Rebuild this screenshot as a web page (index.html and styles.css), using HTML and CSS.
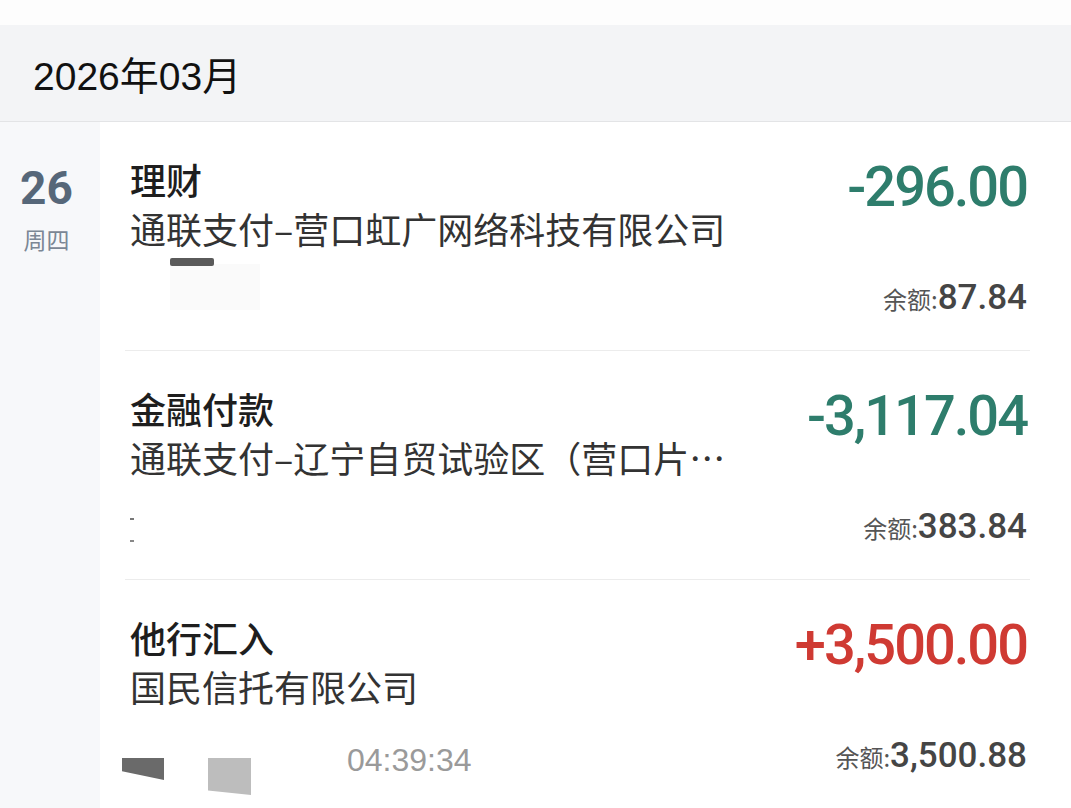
FILE: index.html
```html
<!DOCTYPE html>
<html lang="zh-CN">
<head>
<meta charset="utf-8">
<title>交易明细</title>
<link rel="stylesheet" href="styles.css">
</head>
<body>
<div class="top-strip"></div>
<div class="month">2026年03月</div>
<div class="day">
  <div class="date-col">
    <div class="date-num">26</div>
    <div class="date-week">周四</div>
  </div>
  <div class="list">
    <div class="item">
      <div class="info">
        <div class="title">理财</div>
        <div class="sub">通联支付–营口虹广网络科技有限公司</div>
        <div class="meta"><span class="mask mask-ghost"></span><span class="mask mask-bar"></span></div>
      </div>
      <div class="money">
        <div class="amount out">-296.00</div>
        <div class="balance"><span class="bal-label">余额:</span><span class="bal-num">87.84</span></div>
      </div>
    </div>
    <div class="item">
      <div class="info">
        <div class="title">金融付款</div>
        <div class="sub">通联支付–辽宁自贸试验区（营口片…</div>
        <div class="meta"><span class="mask mask-tick"></span></div>
      </div>
      <div class="money">
        <div class="amount out">-3,117.04</div>
        <div class="balance"><span class="bal-label">余额:</span><span class="bal-num">383.84</span></div>
      </div>
    </div>
    <div class="item last">
      <div class="info">
        <div class="title">他行汇入</div>
        <div class="sub">国民信托有限公司</div>
        <div class="meta"><span class="mask mask-dark"></span><span class="mask mask-light"></span><span class="time">04:39:34</span></div>
      </div>
      <div class="money">
        <div class="amount in">+3,500.00</div>
        <div class="balance"><span class="bal-label">余额:</span><span class="bal-num">3,500.88</span></div>
      </div>
    </div>
  </div>
</div>
</body>
</html>
```

FILE: styles.css
```css
html, body {
  margin: 0;
  padding: 0;
  background: #ffffff;
  font-family: "Liberation Sans", "Noto Sans CJK SC", sans-serif;
}

.top-strip {
  height: 25px;
  background: #fdfdfd;
}

.month {
  height: 97px;
  box-sizing: border-box;
  padding-left: 33px;
  background: #f3f4f6;
  border-bottom: 1px solid #e3e4e6;
  display: flex;
  align-items: center;
  font-size: 39px;
  color: #111111;
  font-family: "Liberation Sans", "Noto Sans CJK SC", sans-serif;
}

.day {
  display: flex;
  min-height: 690px;
}

.date-col {
  width: 100px;
  flex: none;
  background: #f7f8fa;
  display: flex;
  flex-direction: column;
  align-items: center;
  padding-top: 41px;
}

.date-num {
  font-family: Roboto, "Liberation Sans", sans-serif;
  font-weight: 700;
  font-size: 46px;
  line-height: 50px;
  color: #566779;
  margin-left: -7px;
}

.date-week {
  font-family: "Noto Sans CJK SC", sans-serif;
  font-size: 23px;
  line-height: 30px;
  margin-top: 11px;
  color: #7b8795;
  margin-left: -7px;
}

.list {
  flex: 1;
  padding: 0 41px 0 25px;
}

.item {
  height: 229px;
  box-sizing: border-box;
  border-bottom: 1px solid #ececec;
  display: flex;
  justify-content: space-between;
  padding: 0 3px 0 5px;
}

.item.last {
  border-bottom: none;
}

.info {
  padding-top: 33px;
  min-width: 0;
}

.title {
  font-family: "Noto Sans CJK SC", sans-serif;
  font-weight: 500;
  font-size: 36px;
  line-height: 48px;
  color: #1e1e1e;
}

.sub {
  font-family: "Noto Sans CJK SC", sans-serif;
  font-size: 36px;
  line-height: 50px;
  color: #333333;
  white-space: nowrap;
}

.meta {
  margin-top: 25px;
  height: 40px;
  display: flex;
  align-items: center;
}

.mask {
  display: inline-block;
  align-self: flex-start;
  flex: none;
}

.mask-ghost {
  width: 90px;
  height: 46px;
  background: #fafafa;
  margin-left: 40px;
  margin-top: -14px;
}

.mask-bar {
  width: 44px;
  height: 8px;
  background: #5a5a5a;
  margin-left: -90px;
  margin-top: -20px;
  border-radius: 2px;
}

.mask-tick {
  width: 4px;
  height: 2px;
  background: #777777;
  margin-top: 11px;
  box-shadow: 0 22px 0 #888888;
}

.mask-dark {
  width: 42px;
  height: 22px;
  background: #6a6a6a;
  margin-left: -8px;
  margin-top: 22px;
  clip-path: polygon(0 0, 100% 0, 100% 100%, 0 60%);
}

.mask-light {
  width: 43px;
  height: 37px;
  background: #bdbdbd;
  margin-left: 44px;
  margin-top: 22px;
  clip-path: polygon(0 0, 100% 0, 100% 100%, 0 88%);
}

.time {
  font-family: "Liberation Sans", sans-serif;
  font-size: 32px;
  color: #9a9a9a;
  margin-left: 96px;
  margin-top: 8px;
}

.money {
  display: flex;
  flex-direction: column;
  align-items: flex-end;
  padding-top: 35px;
}

.amount {
  font-family: Roboto, "Liberation Sans", sans-serif;
  font-weight: 500;
  font-size: 56px;
  letter-spacing: -2px;
  line-height: 60px;
}

.amount.out {
  color: #2e7d6c;
}

.amount.in {
  color: #cf3a33;
}

.balance {
  margin-top: 61px;
  line-height: 40px;
  display: flex;
  align-items: baseline;
}

.bal-label {
  font-family: "Noto Sans CJK SC", sans-serif;
  font-size: 24px;
  color: #555555;
}

.bal-num {
  font-family: Roboto, "Liberation Sans", sans-serif;
  font-weight: 500;
  font-size: 35px;
  color: #454545;
}
```
